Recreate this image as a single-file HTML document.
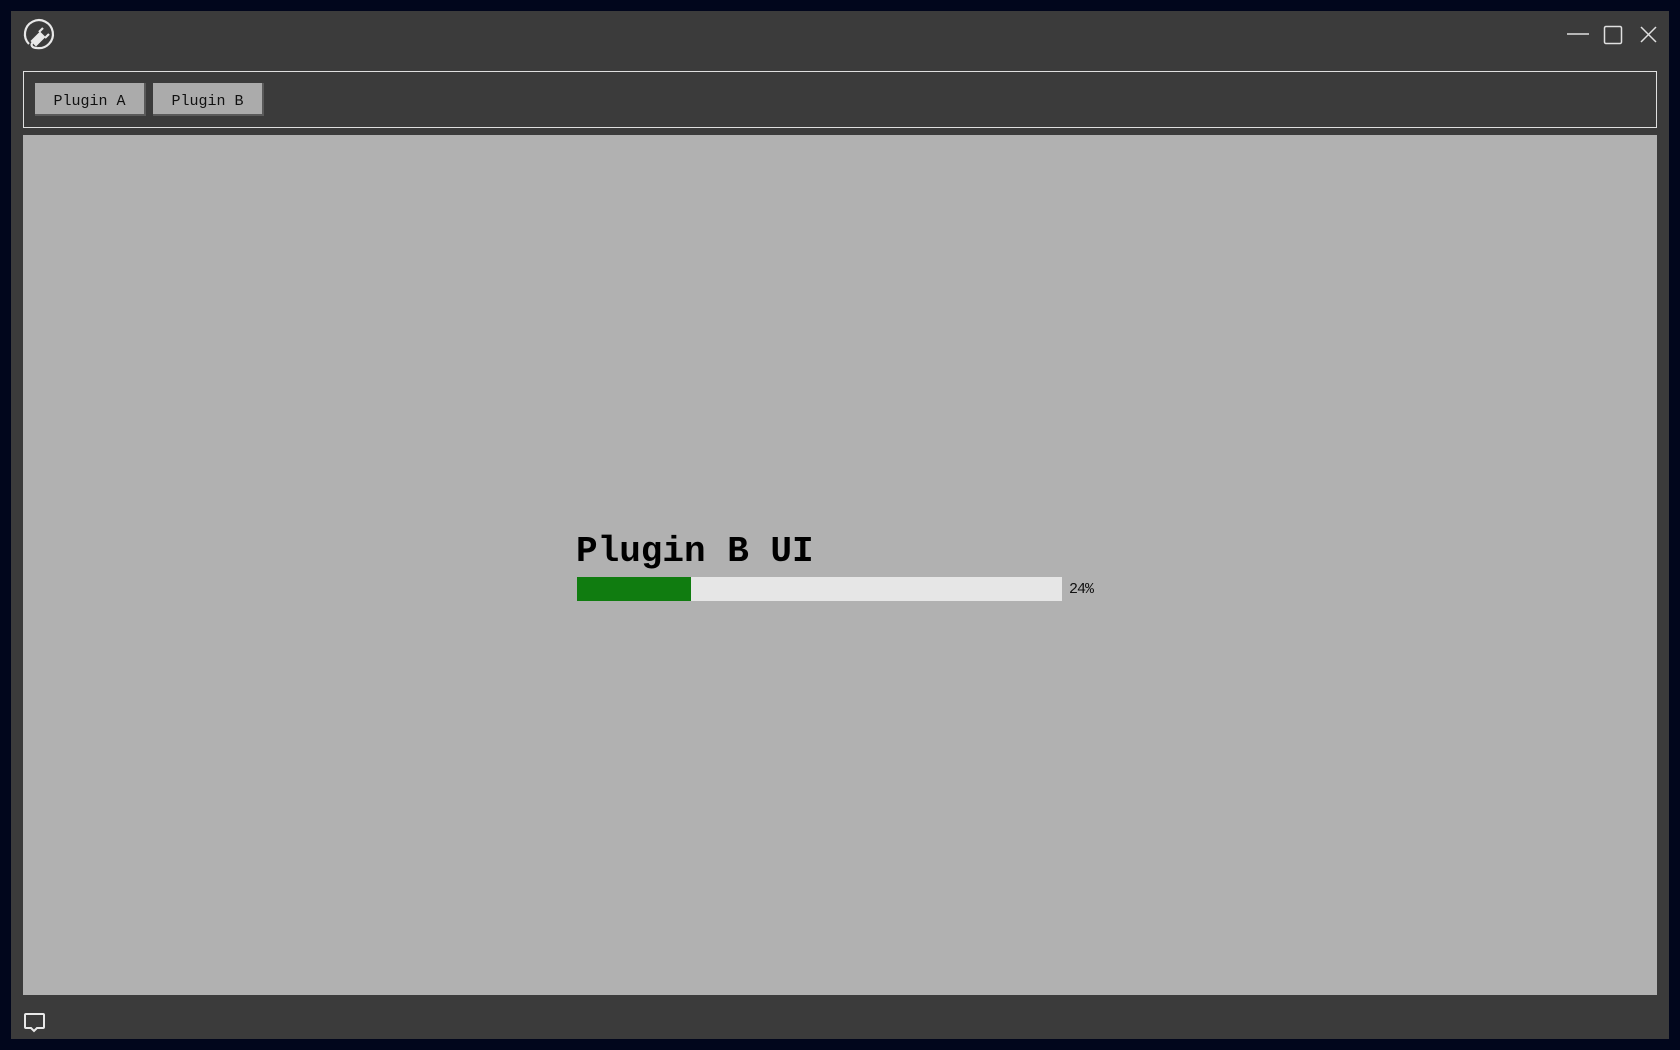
<!DOCTYPE html>
<html><head><meta charset="utf-8"><style>
html,body{margin:0;padding:0;width:1680px;height:1050px;overflow:hidden;background:#01061c;}
.win{position:absolute;left:11px;top:11px;width:1658px;height:1028px;background:#3b3b3b;}
.tb{position:absolute;left:23px;top:71px;width:1632px;height:55px;border:1px solid #e0e0e0;}
.btn{position:absolute;top:83px;width:111px;height:33px;background:#ababab;border-right:2px solid #5a5a5a;border-bottom:2px solid #5a5a5a;box-sizing:border-box;font:15px "Liberation Mono",monospace;color:#111;text-align:center;line-height:37px;}
.content{position:absolute;left:23px;top:135px;width:1634px;height:860px;background:#b1b1b1;}
.title{position:absolute;left:576px;top:531px;font:bold 36px "Liberation Mono",monospace;color:#000;}
.bar{position:absolute;left:577px;top:577px;width:485px;height:24px;background:#e6e6e6;}
.fill{position:absolute;left:0;top:0;width:114px;height:24px;background:#107c10;}
.pct{position:absolute;left:1069px;top:581px;font:15px "Liberation Mono",monospace;color:#111;letter-spacing:-1px;}
</style></head><body>
<div class="win"></div>
<svg style="position:absolute;left:20px;top:17px" width="36" height="36" viewBox="0 0 36 36" fill="none" stroke="#e8e8e8" stroke-width="2.2">
<path d="M9 27 A14 14 0 1 1 17 31"/>
<path d="M17 31 C12 31 10 28 13 25" />
<path d="M12 24 L20 16 L24 20 L16 28 Z" fill="#e8e8e8"/>
<path d="M19 15 L23 11 M25 21 L29 17" />
</svg>
<svg style="position:absolute;left:1560px;top:22px" width="110" height="26" viewBox="0 0 110 26" fill="none" stroke="#e0e0e0" stroke-width="1.5">
<path d="M7 12 H29"/>
<rect x="44.5" y="4.5" width="17" height="17" rx="1.5"/>
<path d="M81 5 L96 20 M96 5 L81 20"/>
</svg>
<div class="tb"></div>
<div class="btn" style="left:35px">Plugin A</div>
<div class="btn" style="left:153px">Plugin B</div>
<div class="content"></div>
<div class="title">Plugin B UI</div>
<div class="bar"><div class="fill"></div></div>
<div class="pct">24%</div>
<svg style="position:absolute;left:23px;top:1012px" width="24" height="22" viewBox="0 0 24 22" fill="none" stroke="#e8e8e8" stroke-width="2">
<path d="M3 2 H20 Q21 2 21 3 V15 Q21 16 20 16 H14 L11 19 L8 16 H3 Q2 16 2 15 V3 Q2 2 3 2 Z"/>
</svg>
</body></html>
